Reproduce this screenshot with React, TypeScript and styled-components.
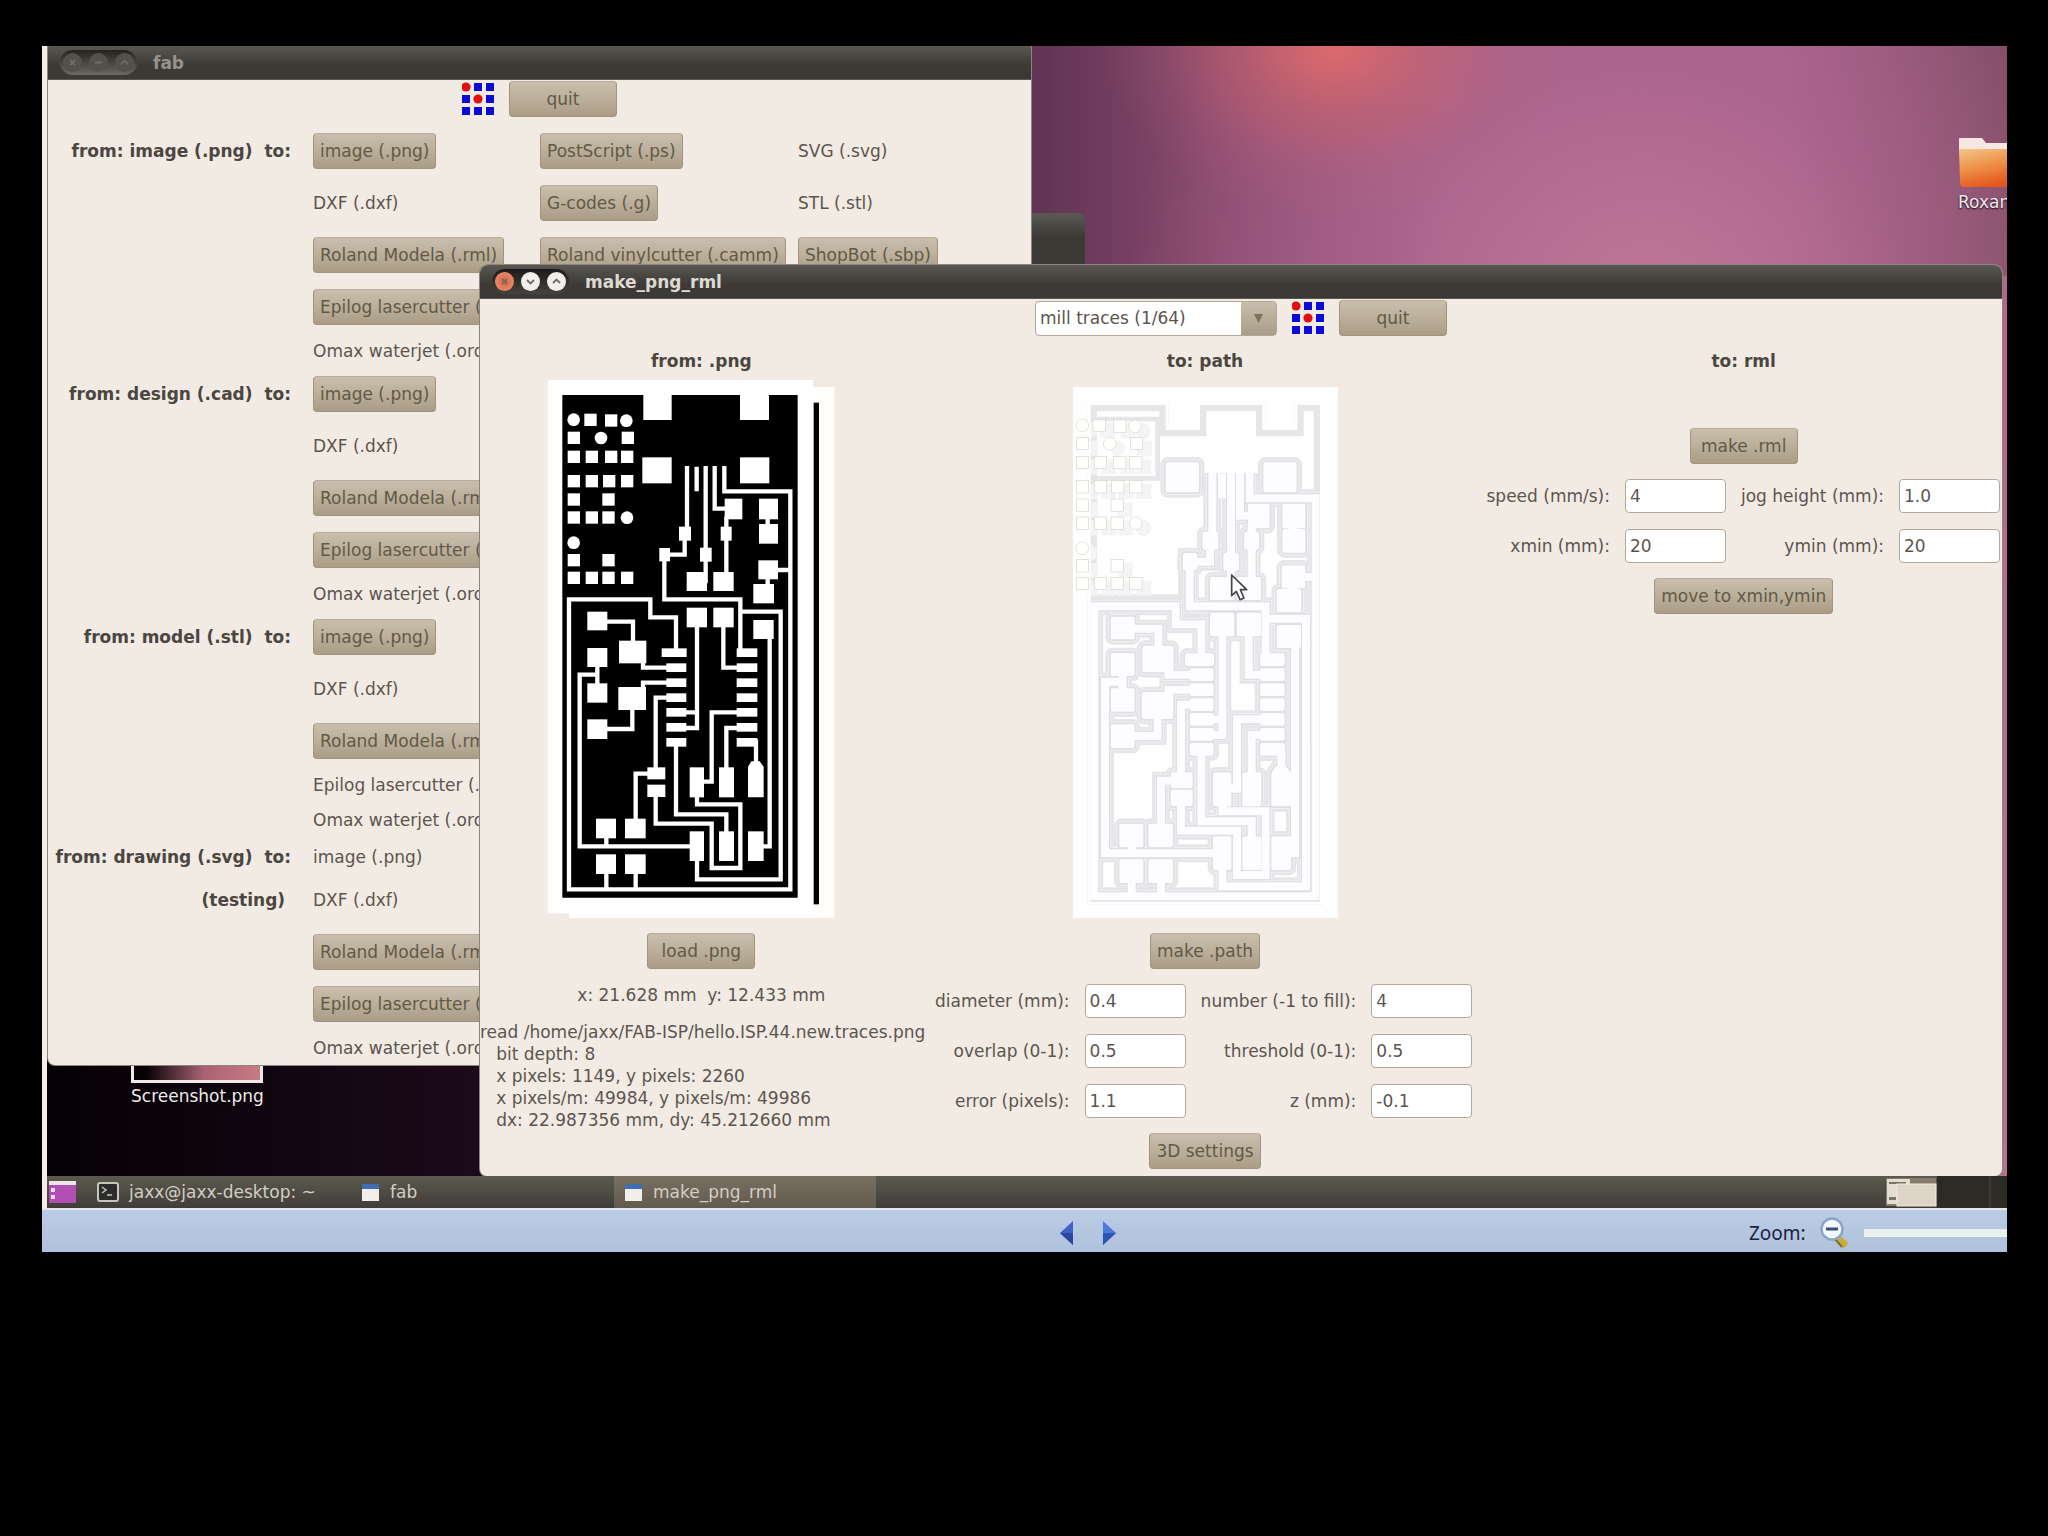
import React from "react";
import styled, { createGlobalStyle, css } from "styled-components";

const ink = "#5c554e";
const paper = "#f1ebe4";

const GlobalStyle = createGlobalStyle`
  *, *::before, *::after { box-sizing: border-box; }
  body {
    margin: 0;
    min-height: 100vh;
    background: #000;
    color: ${ink};
    font: 17px/22px "DejaVu Sans", "Liberation Sans", sans-serif;
  }
  button, input, select { font: inherit; color: inherit; margin: 0; }
`;

const Page = styled.main`
  padding: 46px 41px 0 42px;
`;

const Screen = styled.div`
  display: flex;
  flex-direction: column;
  overflow: hidden;
  background: #f3efe8;
`;

const Desktop = styled.div`
  position: relative;
  height: 1130px;
  margin-left: 5px;
  overflow: hidden;
  background:
    radial-gradient(ellipse 230px 170px at 1288px 0, #dd6a6c 0%, #cb636c90 40%, #b8607830 75%, transparent 100%),
    radial-gradient(ellipse 520px 480px at 1600px 260px, #c2779a 0%, #b0689090 50%, transparent 100%),
    linear-gradient(90deg, #050104 0, #1c0a1a 430px, #5f3352 980px, #87496d 1160px, #a7628a 1400px, #a5608a 1740px, #7d4a62 1960px);
`;

const StripEdge = styled.div`
  position: absolute;
  inset: 230px 0 0 auto;
  width: 10px;
  background: linear-gradient(180deg, #b5668d, #b9718f);
`;

const DesktopIcon = styled.figure<{ $left: number; $top: number; $width: number }>`
  position: absolute;
  left: ${(p) => p.$left}px;
  top: ${(p) => p.$top}px;
  width: ${(p) => p.$width}px;
  margin: 0;
  color: #efe9ee;
  white-space: nowrap;
  text-shadow: 0 1px 2px #000;
  svg { display: block; }
  figcaption { padding-top: 2px; }
`;

const Thumb = styled.div`
  height: 56px;
  border: 3px solid #efe9ea;
  background: linear-gradient(90deg, #060204 10%, #a96273 55%, #c87a84);
`;

const Window = styled.section<{ $left: number; $top: number; $width?: number; $height?: number; $radius?: number }>`
  position: absolute;
  left: ${(p) => p.$left}px;
  top: ${(p) => p.$top}px;
  ${(p) => (p.$width ? css`width: ${p.$width}px;` : css`right: 5px;`)}
  ${(p) => p.$height && css`height: ${p.$height}px;`}
  overflow: hidden;
  border-radius: ${(p) => p.$radius ?? 8}px ${(p) => p.$radius ?? 8}px 7px 7px;
  background: ${paper};
  box-shadow: 0 0 0 1px #8b867d;
`;

const BackWindow = styled.div`
  position: absolute;
  left: 700px;
  top: 167px;
  width: 338px;
  height: 200px;
  border-radius: 8px;
  background: linear-gradient(180deg, #5b5a55 0, #474641 14px, #3d3a36 24px, #3f3e39 100%);
`;

const TitleBar = styled.header<{ $active?: boolean }>`
  display: flex;
  align-items: center;
  height: 34px;
  padding-left: 12px;
  gap: 16px;
  background: linear-gradient(180deg, #585752 0, #474641 35%, #3d3a36 60%, #3b3935 100%);
  border-bottom: 1px solid #5b5853;
  color: ${(p) => (p.$active ? "#dedad2" : "#96928a")};
`;

const WindowTitle = styled.h1`
  margin: 0;
  font-size: 17px;
  line-height: 22px;
  font-weight: bold;
`;

const TitleButtons = styled.div<{ $active?: boolean }>`
  display: flex;
  gap: 7px;
  padding: 3px;
  border-radius: 13px;
  background: ${(p) => (p.$active ? "linear-gradient(180deg, #1d1c1a, #45433f)" : "linear-gradient(180deg, #23221f, #6a6862)")};
`;

const RoundButton = styled.button<{ $fill: string }>`
  display: grid;
  place-items: center;
  width: 19px;
  height: 19px;
  padding: 0;
  border: 0;
  border-radius: 50%;
  background: ${(p) => p.$fill};
  color: #706b64;
`;

const ToolRow = styled.div`
  display: flex;
  justify-content: center;
  align-items: center;
  gap: 15px;
  padding-top: 1px;
`;

const PushButton = styled.button`
  height: 36px;
  min-width: 108px;
  padding: 0 6px;
  border: 1px solid #a09480;
  border-top-color: #b9ae9c;
  border-radius: 4px;
  background: linear-gradient(180deg, #c9beac 0, #bdb19d 45%, #a99d86 100%);
  color: #625945;
  white-space: nowrap;
`;

const FormatTable = styled.div`
  padding-top: 8px;
`;

const FormatGroup = styled.div<{ $inset?: number }>`
  padding-top: ${(p) => p.$inset ?? 0}px;
`;

const FormatRow = styled.div<{ $tall: boolean }>`
  display: grid;
  grid-template-columns: 265px 227px 258px 1fr;
  align-items: center;
  height: ${(p) => (p.$tall ? 52 : 35)}px;
  white-space: nowrap;
`;

const FormatHeading = styled.strong`
  justify-self: end;
  padding-right: 22px;
  white-space: pre;
  color: #4b463f;
`;

const Columns = styled.div`
  display: grid;
  grid-template-columns: minmax(0, 443fr) minmax(0, 535fr) minmax(0, 513fr);
  gap: 15px;
  padding: 15px 2px 7px 0;
`;

const Column = styled.div`
  display: flex;
  flex-direction: column;
  align-items: center;
  gap: 15px;
`;

const ColumnHeading = styled.h2<{ $space?: number }>`
  margin: 0 0 ${(p) => p.$space ?? 0}px;
  font-size: 17px;
  line-height: 21px;
  color: #4b463f;
`;

const Readout = styled.output`
  white-space: pre;
`;

const Log = styled.pre`
  align-self: start;
  margin: 0;
  font: inherit;
`;

const Fields = styled.div`
  display: grid;
  grid-template-columns: auto 101px auto 101px;
  gap: 16px 15px;
  align-items: center;
  align-self: stretch;
  justify-content: end;
  text-align: right;
  white-space: nowrap;
`;

const TextBox = styled.input`
  width: 101px;
  height: 34px;
  padding: 0 4px;
  border: 1px solid #b3a898;
  border-radius: 4px;
  background: #fff;
  outline: 0;
`;

const SelectWrap = styled.div`
  position: relative;
  svg { position: absolute; right: 13px; top: 12px; pointer-events: none; }
`;

const Select = styled.select`
  display: block;
  width: 242px;
  height: 35px;
  padding: 0 40px 0 4px;
  appearance: none;
  border: 1px solid #b3a898;
  border-radius: 4px;
  background: linear-gradient(180deg, #c9beac, #a99d86) right / 35px 100% no-repeat, #fff;
`;

const Drawing = styled.svg`
  display: block;
  width: 265px;
  height: 531px;
  overflow: visible;
`;

const TaskBar = styled.nav`
  display: flex;
  align-items: center;
  height: 32px;
  margin-left: 5px;
  background: linear-gradient(180deg, #5c5a4e, #403d38);
  color: #d3cec4;
`;

const Task = styled.button<{ $width: number; $active?: boolean }>`
  display: flex;
  align-items: center;
  gap: 10px;
  width: ${(p) => p.$width}px;
  height: 32px;
  padding: 0 10px;
  border: 0;
  background: ${(p) => (p.$active ? "linear-gradient(180deg, #777060, #635a4f)" : "transparent")};
  white-space: nowrap;
  svg { flex: none; }
`;

const Tray = styled.div`
  display: flex;
  align-items: center;
  height: 32px;
  margin-left: auto;
  &::after {
    content: "";
    width: 70px;
    height: 32px;
    background: linear-gradient(90deg, #2c2b26 52px, #3a3833 52px, #3a3833 54px, #2c2b26 54px);
  }
`;

const ViewerBar = styled.footer`
  display: flex;
  align-items: center;
  height: 44px;
  padding-top: 4px;
  border-top: 2px solid #e3e6ea;
  background: linear-gradient(180deg, #bacde4, #b0c1dc);
  color: #1a2340;
`;

const PageArrows = styled.div`
  display: flex;
  gap: 28px;
  padding-left: 1017px;
`;

const ArrowButton = styled.button`
  display: block;
  padding: 0;
  border: 0;
  background: none;
  svg { display: block; }
`;

const ZoomTools = styled.div`
  display: flex;
  align-items: center;
  width: 258px;
  margin-left: auto;
  overflow: hidden;
  gap: 14px;
  label { font: 19px/24px "Noto Sans", sans-serif; }
  svg { flex: none; }
`;

const ZoomSlider = styled.input`
  flex: none;
  width: 320px;
  height: 8px;
  margin: 0;
  appearance: none;
  background: linear-gradient(180deg, #e6eeee, #eaf7f0);
`;

const FabLogo = () => (
  <svg width="32" height="34" viewBox="0 0 32 34" aria-hidden="true">
    {[0, 1, 2].flatMap((r) =>
      [0, 1, 2].map((c) =>
        r === c && r < 2 ? (
          <circle key={`${r}${c}`} cx={4 + c * 12} cy={5 + r * 12} r="4.6" fill="#e01010" />
        ) : (
          <rect key={`${r}${c}`} x={c * 12} y={1 + r * 12} width="8" height="8" fill="#0c0cd8" />
        )
      )
    )}
  </svg>
);

const Glyph = ({ d }: { d: string }) => (
  <svg width="11" height="11" viewBox="0 0 11 11" fill="none" stroke="currentColor" strokeWidth="1.8">
    <path d={d} />
  </svg>
);

const Title = ({ name, active }: { name: string; active?: boolean }) => (
  <TitleBar $active={active}>
    <TitleButtons $active={active}>
      <RoundButton aria-label="Close" $fill={active ? "radial-gradient(#d9633f, #ee9878)" : "#53514c"}>
        <Glyph d="M3 3l5 5M8 3l-5 5" />
      </RoundButton>
      <RoundButton aria-label="Minimize" $fill={active ? "#f1efeb" : "#53514c"}>
        <Glyph d={active ? "M2 4l3.500 3.500L9 4" : "M2 5.500h7"} />
      </RoundButton>
      <RoundButton aria-label="Maximize" $fill={active ? "#f1efeb" : "#53514c"}>
        <Glyph d="M2 7l3.500-3.500L9 7" />
      </RoundButton>
    </TitleButtons>
    <WindowTitle>{name}</WindowTitle>
  </TitleBar>
);

type Cell = { text: string; button?: boolean };
type Line = { heading?: string; tall: boolean; cells: Cell[] };
const b = (text: string): Cell => ({ text, button: true });
const t = (text: string): Cell => ({ text });

const shared = (laser: boolean): Line[] => [
  { tall: true, cells: [b("Roland Modela (.rml)")] },
  { tall: laser, cells: [laser ? b("Epilog lasercutter (.epi)") : t("Epilog lasercutter (.epi)")] },
  { tall: false, cells: [t("Omax waterjet (.ord)")] },
];

const groups: Line[][] = [
  [
    { heading: "from: image (.png)  to:", tall: true, cells: [b("image (.png)"), b("PostScript (.ps)"), t("SVG (.svg)")] },
    { tall: true, cells: [t("DXF (.dxf)"), b("G-codes (.g)"), t("STL (.stl)")] },
    { tall: true, cells: [b("Roland Modela (.rml)"), b("Roland vinylcutter (.camm)"), b("ShopBot (.sbp)")] },
    ...shared(true).slice(1),
  ],
  [
    { heading: "from: design (.cad)  to:", tall: true, cells: [b("image (.png)")] },
    { tall: true, cells: [t("DXF (.dxf)")] },
    ...shared(true),
  ],
  [
    { heading: "from: model (.stl)  to:", tall: true, cells: [b("image (.png)")] },
    { tall: true, cells: [t("DXF (.dxf)")] },
    ...shared(false),
  ],
  [
    { heading: "from: drawing (.svg)  to:", tall: false, cells: [t("image (.png)")] },
    { heading: "(testing) ", tall: true, cells: [t("DXF (.dxf)")] },
    ...shared(true),
  ],
];

/* Board artwork, three drawing units to the pixel. */
const outline = "M70 75H313V150H398V75H603V150H690V75H776V1583H70Z";

const wires = [
  "M444 288V490M437 505V554H376", "M376 570V688H604V840M604 725H725V1528H474V1465",
  "M473 290V364", "M500 288V640", "M527 288V416H562", "M562 440V610",
  "M556 288V364H754V1558H90V688H334V742H411V840",
  "M686 440V470M686 620V650M715 600H754", "M474 765V1074H440M440 1027H474",
  "M553 765V893H595", "M692 800V1429H670", "M203 755H282V815", "M312 875V893H385",
  "M175 885V945M175 914H122V1429H455", "M312 955V938H385M280 1015V1077H203",
  "M385 983H350V1195M328 1211H290V1350", "M350 1275V1361H518V1494H604V1303H474V1278",
  "M490 1235H518V1027H595", "M595 1074H562V1195", "M640 1115H651V1180",
  "M411 1125V1333H562V1388", "M202 1400V1429M202 1508V1558M290 1508V1558",
].join("");

const pads: number[][] = [
  [310, 262, 88, 78], [603, 262, 88, 78], [420, 470, 36, 42], [361, 534, 32, 40], [483, 533, 35, 42],
  [443, 606, 61, 57], [557, 386, 53, 62], [545, 470, 33, 42], [523, 606, 61, 57], [660, 386, 57, 62],
  [660, 462, 57, 59], [658, 571, 59, 57], [643, 642, 62, 58], [443, 713, 61, 59], [523, 713, 61, 59],
  [643, 750, 61, 57], [145, 725, 60, 56], [240, 812, 82, 68], [145, 834, 60, 57], [145, 940, 60, 58],
  [238, 951, 83, 69], [145, 1048, 60, 59], [368, 835, 75, 26], [325, 1192, 54, 36], [258, 1346, 62, 59],
  [325, 1244, 54, 37], [452, 1192, 43, 90], [540, 1192, 45, 90], [540, 1384, 45, 89], [452, 1384, 43, 89],
  [627, 1384, 47, 89], [171, 1346, 60, 59], [171, 1453, 60, 59], [258, 1453, 62, 59], [593, 835, 62, 26],
  ...[880, 925, 970, 1014, 1059, 1104].flatMap((y) => [[382, y, 60, 26], [593, y, 62, 26]]),
];

const squares: number[][] = [
  [136, 131], [198, 133], [86, 185], [248, 185], [86, 242], [140, 242], [198, 242], [246, 242],
  [86, 315], [140, 315], [192, 315], [246, 315], [86, 370], [190, 370], [86, 424], [140, 424], [190, 424],
  [86, 552], [190, 552], [86, 605], [140, 605], [190, 605], [246, 605],
];
const dots: number[][] = [[104, 149], [262, 152], [186, 204], [264, 443], [104, 518]];

const Copper = ({ color, wire, grow = 0 }: { color: string; wire: number; grow?: number }) => (
  <g fill={color} stroke={color} strokeWidth={grow} strokeLinejoin="round">
    <path d={wires} fill="none" strokeWidth={wire} strokeLinejoin="miter" />
    {pads.map(([x, y, w, h]) => <rect key={`${x}-${y}`} x={x} y={y} width={w} height={h} />)}
    <path d="M637 1174H662L674 1190V1282H627V1190Z" />
  </g>
);

const Holes = (props: React.SVGProps<SVGGElement>) => (
  <g {...props}>
    {squares.map(([x, y]) => <rect key={`${x}-${y}`} x={x} y={y} width="37" height="37" />)}
    {dots.map(([x, y]) => <circle key={`${x}-${y}`} cx={x} cy={y} r="19" />)}
  </g>
);

const BoardImage = () => (
  <Drawing viewBox="90 51 795 1593" role="img" aria-label="Circuit board traces">
    <rect x="90" y="51" width="796" height="1593" fill="#fffefa" />
    <rect x="824" y="98" width="16" height="1505" fill="#000" />
    <rect x="26" y="30" width="796" height="1600" fill="#fff" />
    <path d={outline} fill="#000" />
    <Copper color="#fff" wire={13} />
    <Holes fill="#fff" />
  </Drawing>
);

const ToolPath = () => (
  <Drawing viewBox="26 30 795 1593" role="img" aria-label="Milling path">
    <defs>
      <clipPath id="board"><path d={outline} /></clipPath>
    </defs>
    <rect x="26" y="30" width="795" height="1593" fill="#fefefe" />
    <g clipPath="url(#board)">
      <path d={outline} fill="none" stroke="#e6e5e8" strokeWidth="56" />
      <Copper color="#e6e5e8" wire={54} grow={44} />
      <path d="M84 304H280V126H90M84 659H348V520H425V290" fill="none" stroke="#e6e5e8" strokeWidth="14" />
      <Holes fill="#f5f4f4" stroke="#f5f4f4" strokeWidth="8" transform="translate(-26 10)" />
      <Copper color="#f0eff2" wire={38} grow={28} />
      <Copper color="#dfdee2" wire={32} grow={22} />
      <path d={outline} fill="none" stroke="#fefefe" strokeWidth="18" />
      <Copper color="#fdfcfe" wire={24} grow={12} />
    </g>
    <Holes transform="translate(-50 -4)" fill="#fffffd" stroke="#d6d5cf" strokeWidth="2" />
    <path
      d="M502 594V656L516 643L527 668L539 663L528 638H547Z"
      fill="#fff" stroke="#45434a" strokeWidth="5" strokeLinejoin="round"
    />
  </Drawing>
);

const Field = ({ id, label, value }: { id: string; label: string; value: string }) => (
  <>
    <label htmlFor={id}>{label}</label>
    <TextBox id={id} defaultValue={value} />
  </>
);

const AppIcon = () => (
  <svg width="19" height="20" viewBox="0 0 19 20" aria-hidden="true">
    <rect x="1" y="2" width="17" height="17" fill="#f1efe8" />
    <rect x="1" y="2" width="17" height="5" fill="#3f6fb0" />
  </svg>
);

const TerminalIcon = () => (
  <svg width="22" height="20" viewBox="0 0 22 20" aria-hidden="true">
    <rect x="1" y="1" width="20" height="18" rx="2" fill="#2c2c2a" stroke="#c8c5bd" strokeWidth="2" />
    <path d="M5 5l4 3-4 3M10 13h5" fill="none" stroke="#c8c5bd" strokeWidth="1.500" />
  </svg>
);

export default function App() {
  return (
    <Page>
      <GlobalStyle />
      <Screen>
        <Desktop>
          <StripEdge />
          <DesktopIcon $left={1911} $top={91} $width={70}>
            <svg width="70" height="52" viewBox="0 0 70 52" aria-hidden="true">
              <defs>
                <linearGradient id="folder" x1="0" y1="0" x2=".4" y2="1">
                  <stop offset="0" stopColor="#f3c78c" />
                  <stop offset=".5" stopColor="#ee9147" />
                  <stop offset="1" stopColor="#e6551c" />
                </linearGradient>
              </defs>
              <path d="M1 6V1H24L28 6H70V16H1Z" fill="#f6e7e2" />
              <path d="M1 12H70V50H6Q2 50 2 44Z" fill="url(#folder)" />
            </svg>
            <figcaption>Roxan</figcaption>
          </DesktopIcon>
          <DesktopIcon $left={84} $top={981} $width={132}>
            <Thumb />
            <figcaption>Screenshot.png</figcaption>
          </DesktopIcon>

          <BackWindow />

          <Window $left={1} $top={0} $width={983} $radius={1}>
            <Title name="fab" />
            <ToolRow>
              <FabLogo />
              <PushButton>quit</PushButton>
            </ToolRow>
            <FormatTable>
              {groups.map((group, g) => (
                <FormatGroup key={g} $inset={g === 3 ? 2 : 0}>
                  {group.map((line, i) => (
                    <FormatRow key={i} $tall={line.tall}>
                      <FormatHeading>{line.heading}</FormatHeading>
                      {line.cells.map((c) => (
                        <div key={c.text}>{c.button ? <PushButton>{c.text}</PushButton> : c.text}</div>
                      ))}
                    </FormatRow>
                  ))}
                </FormatGroup>
              ))}
            </FormatTable>
          </Window>

          <Window $left={433} $top={219}>
            <Title name="make_png_rml" active />
            <ToolRow>
              <SelectWrap>
                <Select aria-label="process" defaultValue="traces">
                  <option value="traces">mill traces (1/64)</option>
                  <option value="board">cut out board (1/32)</option>
                </Select>
                <svg width="11" height="11" viewBox="0 0 11 11" aria-hidden="true">
                  <path d="M1 1H10L5.500 10Z" fill="#7d7260" />
                </svg>
              </SelectWrap>
              <FabLogo />
              <PushButton>quit</PushButton>
            </ToolRow>
            <Columns>
              <Column>
                <ColumnHeading>from: .png</ColumnHeading>
                <BoardImage />
                <PushButton>load .png</PushButton>
                <Readout>{"x: 21.628 mm  y: 12.433 mm"}</Readout>
                <Log>
                  {[
                    "read /home/jaxx/FAB-ISP/hello.ISP.44.new.traces.png",
                    "   bit depth: 8",
                    "   x pixels: 1149, y pixels: 2260",
                    "   x pixels/m: 49984, y pixels/m: 49986",
                    "   dx: 22.987356 mm, dy: 45.212660 mm",
                  ].join("\n")}
                </Log>
              </Column>
              <Column>
                <ColumnHeading>to: path</ColumnHeading>
                <ToolPath />
                <PushButton>make .path</PushButton>
                <Fields>
                  <Field id="diameter" label="diameter (mm):" value="0.4" />
                  <Field id="number" label="number (-1 to fill):" value="4" />
                  <Field id="overlap" label="overlap (0-1):" value="0.5" />
                  <Field id="threshold" label="threshold (0-1):" value="0.5" />
                  <Field id="error" label="error (pixels):" value="1.1" />
                  <Field id="z" label="z (mm):" value="-0.1" />
                </Fields>
                <PushButton>3D settings</PushButton>
              </Column>
              <Column>
                <ColumnHeading $space={41}>to: rml</ColumnHeading>
                <PushButton>make .rml</PushButton>
                <Fields>
                  <Field id="speed" label="speed (mm/s):" value="4" />
                  <Field id="jog" label="jog height (mm):" value="1.0" />
                  <Field id="xmin" label="xmin (mm):" value="20" />
                  <Field id="ymin" label="ymin (mm):" value="20" />
                </Fields>
                <PushButton>move to xmin,ymin</PushButton>
              </Column>
            </Columns>
          </Window>
        </Desktop>

        <TaskBar>
          <svg width="40" height="32" viewBox="0 0 40 32" aria-hidden="true">
            <rect x="2" y="5" width="27" height="4" fill="#eee6ea" />
            <rect x="2" y="9" width="27" height="18" fill="#b24fb4" />
            <path d="M4 12h4v4H4zM4 19h4v4H4z" fill="#f3dcf2" />
          </svg>
          <Task $width={264}><TerminalIcon />jaxx@jaxx-desktop: ~</Task>
          <Task $width={263}><AppIcon />fab</Task>
          <Task $width={262} $active><AppIcon />make_png_rml</Task>
          <Tray>
            <svg width="52" height="32" viewBox="0 0 52 32" aria-hidden="true">
              <rect x="1" y="2" width="50" height="28" fill="#857c6c" />
              <path d="M2 3H25V10H12V28H2Z" fill="#e4ded2" />
              <path d="M4 6H21V8H4ZM4 21H11V24H4Z" fill="#77736b" />
              <rect x="12" y="8" width="39" height="22" fill="#ded4c8" stroke="#f1eade" />
            </svg>
          </Tray>
        </TaskBar>

        <ViewerBar>
          <PageArrows>
            <ArrowButton aria-label="Previous">
              <svg width="15" height="24" viewBox="0 0 15 24"><path d="M14 0V24L1 12Z" fill="#4263c4" /><path d="M14 12V24L1 12Z" fill="#2b479f" /></svg>
            </ArrowButton>
            <ArrowButton aria-label="Next">
              <svg width="15" height="24" viewBox="0 0 15 24"><path d="M1 0V24L14 12Z" fill="#4a7ad8" /><path d="M1 12V24L14 12Z" fill="#2b55b4" /></svg>
            </ArrowButton>
          </PageArrows>
          <ZoomTools>
            <label htmlFor="zoom">Zoom:</label>
            <svg width="30" height="32" viewBox="0 0 30 32" aria-hidden="true">
              <path d="M17 20L26 29" stroke="#c9ad3c" strokeWidth="7" />
              <path d="M15 22L22 30" stroke="#77703e" strokeWidth="2" />
              <circle cx="12" cy="12" r="10.500" fill="#f4f9ff" stroke="#8ba3c4" strokeWidth="2.500" />
              <path d="M6 12H18" stroke="#35507e" strokeWidth="3" />
            </svg>
            <ZoomSlider id="zoom" type="range" defaultValue="80" />
          </ZoomTools>
        </ViewerBar>
      </Screen>
    </Page>
  );
}
